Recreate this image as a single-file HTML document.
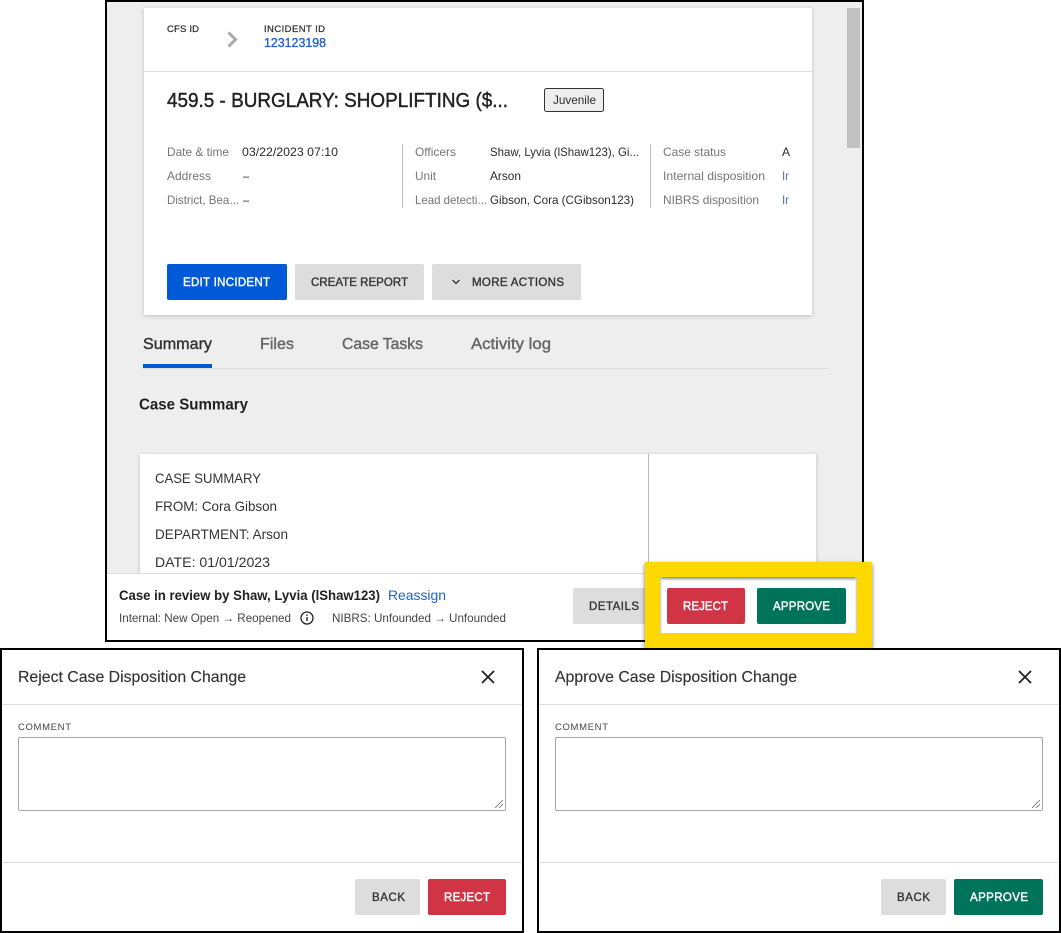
<!DOCTYPE html>
<html><head><meta charset="utf-8"><style>
html,body{margin:0;padding:0;background:#fff;width:1061px;height:933px;overflow:hidden}
svg{display:block}
text{font-family:"Liberation Sans",sans-serif;white-space:pre}
.l{font-size:12px;fill:#757575}
.v{font-size:12px;fill:#2b2b2b}
.b{font-size:11.5px;fill:#333;stroke:#333;stroke-width:.35}
.w{font-size:11.5px;fill:#fff;stroke:#fff;stroke-width:.4}
.t{font-size:16px;fill:#666;stroke:#666;stroke-width:.4}
.s{font-size:14px;fill:#333}
.c{font-size:9.5px;fill:#444}
.h{font-size:16px;fill:#333;stroke:#333;stroke-width:.15}
</style></head><body>
<svg width="1061" height="933" viewBox="0 0 1061 933" xmlns="http://www.w3.org/2000/svg">
<defs>
<filter id="sh" x="-10%" y="-10%" width="120%" height="120%"><feDropShadow dx="0" dy="1" stdDeviation="2" flood-color="#000" flood-opacity=".2"/></filter>
<filter id="ys" x="-10%" y="-20%" width="120%" height="140%"><feDropShadow dx="0" dy="2" stdDeviation="2.5" flood-color="#000" flood-opacity=".55"/></filter>
<linearGradient id="gt" x1="0" y1="0" x2="0" y2="1"><stop offset="0" stop-color="#888"/><stop offset="1" stop-color="#fff"/></linearGradient>
<linearGradient id="gl" x1="0" y1="0" x2="1" y2="0"><stop offset="0" stop-color="#bbb"/><stop offset="1" stop-color="#fff" stop-opacity="0"/></linearGradient>
<linearGradient id="gr" x1="1" y1="0" x2="0" y2="0"><stop offset="0" stop-color="#bbb"/><stop offset="1" stop-color="#fff" stop-opacity="0"/></linearGradient>
</defs>
<rect x="106" y="1" width="757" height="640" fill="#eee" stroke="#000" stroke-width="2"/>
<rect x="847" y="8" width="13" height="140" fill="#c1c1c1"/>
<rect x="144" y="8" width="668" height="307" fill="#fff" filter="url(#sh)"/>
<rect x="144" y="71" width="668" height="1" fill="#ddd"/>
<text x="167" y="32" class="c" style="fill:#333;stroke:#333;stroke-width:.25" textLength="32">CFS ID</text>
<path d="M228.500 32.500 L235.500 39.500 L228.500 46.500" fill="none" stroke="#aaa" stroke-width="3"/>
<text x="264" y="32" class="c" style="fill:#333;stroke:#333;stroke-width:.25" textLength="61">INCIDENT ID</text>
<text x="264" y="47" font-size="13" fill="#1c63d0" stroke="#1c63d0" stroke-width=".35" textLength="62" lengthAdjust="spacingAndGlyphs">123123198</text>
<text x="167" y="107" font-size="20" fill="#212121" stroke="#212121" stroke-width=".4" textLength="341" lengthAdjust="spacingAndGlyphs">459.5 - BURGLARY: SHOPLIFTING ($...</text>
<rect x="544.500" y="88.500" width="59" height="23" rx="2" fill="#eee" stroke="#333"/>
<text x="553" y="104" class="v" textLength="43" lengthAdjust="spacingAndGlyphs">Juvenile</text>

<text x="167" y="156" class="l" textLength="62" lengthAdjust="spacingAndGlyphs">Date &amp; time</text>
<text x="242" y="156" class="v" textLength="96" lengthAdjust="spacingAndGlyphs">03/22/2023 07:10</text>
<text x="167" y="180" class="l" textLength="44" lengthAdjust="spacingAndGlyphs">Address</text>
<text x="243" y="180" class="v" textLength="6" lengthAdjust="spacingAndGlyphs">–</text>
<text x="167" y="204" class="l" textLength="72" lengthAdjust="spacingAndGlyphs">District, Bea...</text>
<text x="243" y="204" class="v" textLength="6" lengthAdjust="spacingAndGlyphs">–</text>
<rect x="402" y="144" width="1" height="64" fill="#bbb"/>
<text x="415" y="156" class="l" textLength="41" lengthAdjust="spacingAndGlyphs">Officers</text>
<text x="490" y="156" class="v" textLength="149" lengthAdjust="spacingAndGlyphs">Shaw, Lyvia (lShaw123), Gi...</text>
<text x="415" y="180" class="l" textLength="21" lengthAdjust="spacingAndGlyphs">Unit</text>
<text x="490" y="180" class="v" textLength="31" lengthAdjust="spacingAndGlyphs">Arson</text>
<text x="415" y="204" class="l" textLength="72" lengthAdjust="spacingAndGlyphs">Lead detecti...</text>
<text x="490" y="204" class="v" textLength="144" lengthAdjust="spacingAndGlyphs">Gibson, Cora (CGibson123)</text>
<rect x="650" y="144" width="1" height="64" fill="#bbb"/>
<text x="663" y="156" class="l" textLength="63" lengthAdjust="spacingAndGlyphs">Case status</text>
<text x="782" y="156" class="v">A</text>
<text x="663" y="180" class="l" textLength="102" lengthAdjust="spacingAndGlyphs">Internal disposition</text>
<text x="782" y="180" class="v" style="fill:#5a6fb0" textLength="7" lengthAdjust="spacingAndGlyphs">Ir</text>
<text x="663" y="204" class="l" textLength="96" lengthAdjust="spacingAndGlyphs">NIBRS disposition</text>
<text x="782" y="204" class="v" style="fill:#5a6fb0" textLength="7" lengthAdjust="spacingAndGlyphs">Ir</text>

<rect x="167" y="264" width="120" height="36" rx="2" fill="#0059d6"/>
<text x="183" y="286" class="w" textLength="87">EDIT INCIDENT</text>
<rect x="295" y="264" width="129" height="36" rx="2" fill="#ddd"/>
<text x="311" y="286" class="b" textLength="97">CREATE REPORT</text>
<rect x="432" y="264" width="149" height="36" rx="2" fill="#ddd"/>
<path d="M452.500 280 L456 283.500 L459.500 280" fill="none" stroke="#333" stroke-width="1.300"/>
<text x="472" y="286" class="b" textLength="92">MORE ACTIONS</text>

<rect x="143" y="368" width="686" height="1" fill="#ddd"/>
<rect x="143" y="364" width="69" height="4" fill="#0059d6"/>
<text x="143" y="349" class="t" style="fill:#333;stroke:#333" textLength="69" lengthAdjust="spacingAndGlyphs">Summary</text>
<text x="260" y="349" class="t" textLength="34" lengthAdjust="spacingAndGlyphs">Files</text>
<text x="342" y="349" class="t" textLength="81" lengthAdjust="spacingAndGlyphs">Case Tasks</text>
<text x="471" y="349" class="t" textLength="80" lengthAdjust="spacingAndGlyphs">Activity log</text>
<text x="139" y="409.500" font-size="16" font-weight="700" fill="#212121" textLength="109" lengthAdjust="spacingAndGlyphs">Case Summary</text>

<rect x="140" y="454" width="676" height="130" fill="#fff" filter="url(#sh)"/>
<rect x="648" y="454" width="1" height="120" fill="#bbb"/>
<text x="155" y="483" class="s" textLength="106" lengthAdjust="spacingAndGlyphs">CASE SUMMARY</text>
<text x="155" y="511" class="s" textLength="122" lengthAdjust="spacingAndGlyphs">FROM: Cora Gibson</text>
<text x="155" y="539" class="s" textLength="133" lengthAdjust="spacingAndGlyphs">DEPARTMENT: Arson</text>
<text x="155" y="567" class="s" textLength="115" lengthAdjust="spacingAndGlyphs">DATE: 01/01/2023</text>

<rect x="107" y="573" width="754" height="67" fill="#fff"/>
<rect x="107" y="573" width="754" height="1" fill="#ddd"/>
<text x="119" y="600" font-size="14" font-weight="700" fill="#212121" textLength="261" lengthAdjust="spacingAndGlyphs">Case in review by Shaw, Lyvia (lShaw123)</text>
<text x="388" y="600" font-size="14" fill="#1c63d0" textLength="58" lengthAdjust="spacingAndGlyphs">Reassign</text>
<text x="119" y="622" class="v" style="fill:#444" textLength="172" lengthAdjust="spacingAndGlyphs">Internal: New Open → Reopened</text>
<circle cx="307" cy="618" r="6" fill="none" stroke="#222" stroke-width="1.300"/>
<rect x="306.300" y="617" width="1.400" height="4" fill="#222"/>
<rect x="306.300" y="614.500" width="1.400" height="1.400" fill="#222"/>
<text x="332" y="622" class="v" style="fill:#444" textLength="174" lengthAdjust="spacingAndGlyphs">NIBRS: Unfounded → Unfounded</text>
<rect x="573" y="588" width="80" height="36" rx="2" fill="#ddd"/>
<text x="589" y="610" class="b" textLength="50">DETAILS</text>

<rect x="645" y="562" width="227" height="86" fill="#ffd800" filter="url(#ys)"/>
<rect x="660" y="577" width="197" height="56" fill="#fff"/>
<rect x="660" y="577" width="197" height="4" fill="url(#gt)"/>
<rect x="660" y="577" width="3" height="56" fill="url(#gl)"/>
<rect x="854" y="577" width="3" height="56" fill="url(#gr)"/>
<rect x="667" y="588" width="78" height="36" rx="2" fill="#d13545"/>
<text x="683" y="610" class="w" textLength="45">REJECT</text>
<rect x="757" y="588" width="89" height="36" rx="2" fill="#00745a"/>
<text x="773" y="610" class="w" textLength="57">APPROVE</text>

<rect x="1" y="649" width="522" height="283" fill="#fff" stroke="#000" stroke-width="2"/>
<rect x="2" y="704" width="520" height="1" fill="#ddd"/>
<rect x="2" y="862" width="520" height="1" fill="#ddd"/>
<text x="18" y="682" class="h" textLength="228" lengthAdjust="spacingAndGlyphs">Reject Case Disposition Change</text>
<path d="M482 671 L494 683 M494 671 L482 683" stroke="#222" stroke-width="1.800" fill="none"/>
<text x="18" y="730" class="c" textLength="53">COMMENT</text>
<rect x="18.500" y="737.500" width="487" height="73" rx="1.500" fill="#fff" stroke="#a5a5a5"/>
<path d="M495 808 L503 800 M499 808 L503 804" stroke="#666" stroke-width=".8"/>
<rect x="355" y="879" width="65" height="36" rx="2" fill="#ddd"/>
<text x="372" y="901" class="b" textLength="33">BACK</text>
<rect x="428" y="879" width="78" height="36" rx="2" fill="#d13545"/>
<text x="444" y="901" class="w" textLength="46">REJECT</text>

<rect x="538" y="649" width="522" height="283" fill="#fff" stroke="#000" stroke-width="2"/>
<rect x="539" y="704" width="520" height="1" fill="#ddd"/>
<rect x="539" y="862" width="520" height="1" fill="#ddd"/>
<text x="555" y="682" class="h" textLength="242" lengthAdjust="spacingAndGlyphs">Approve Case Disposition Change</text>
<path d="M1019 671 L1031 683 M1031 671 L1019 683" stroke="#222" stroke-width="1.800" fill="none"/>
<text x="555" y="730" class="c" textLength="53">COMMENT</text>
<rect x="555.500" y="737.500" width="487" height="73" rx="1.500" fill="#fff" stroke="#a5a5a5"/>
<path d="M1032 808 L1040 800 M1036 808 L1040 804" stroke="#666" stroke-width=".8"/>
<rect x="881" y="879" width="65" height="36" rx="2" fill="#ddd"/>
<text x="897" y="901" class="b" textLength="33">BACK</text>
<rect x="954" y="879" width="89" height="36" rx="2" fill="#00745a"/>
<text x="970" y="901" class="w" textLength="58">APPROVE</text>
</svg>
</body></html>
